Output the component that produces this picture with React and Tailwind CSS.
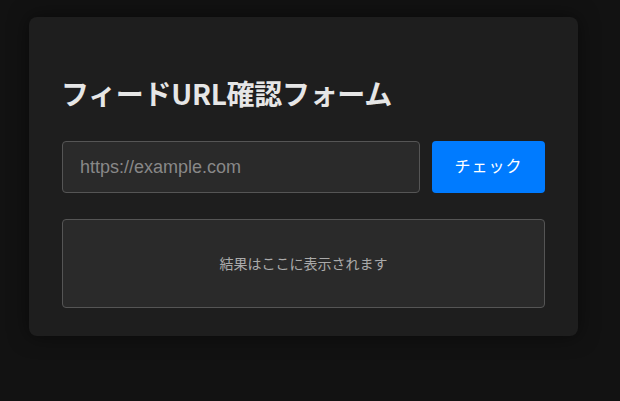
import React, { useState } from 'react';

export default function App() {
  const [url, setUrl] = useState('');

  return (
    <div className="min-h-[401px] bg-[#121212] pt-[17px] pl-[29px]" style={{ fontFamily: '"Noto Sans CJK JP", "Noto Sans", sans-serif' }}>
      <div className="w-[549px] rounded-[8px] bg-[#1e1e1e] px-[33px] pt-[55px] pb-[28px] shadow-[0_0_20px_rgba(0,0,0,0.5)]">
        <h1 className="text-[28px] leading-[42px] font-bold text-[#e6e6e6] mb-[27px] tracking-[-0.3px] -ml-[1px]">
          フィードURL確認フォーム
        </h1>

        <div className="flex gap-[12px]">
          <input
            value={url}
            onChange={e => setUrl(e.target.value)}
            placeholder="https://example.com"
            className="flex-1 h-[52px] rounded-[4px] border border-[#555] bg-[#2a2a2a] px-[17px] text-[18px] text-[#ddd] placeholder:text-[#888] outline-none"
            style={{ fontFamily: '"Liberation Sans", Arial, sans-serif' }}
          />
          <button
            className="w-[113px] h-[52px] rounded-[4px] bg-[#007bff] text-white text-[16px] tracking-[1px]"
            style={{ fontFamily: '"Liberation Serif", "Noto Sans CJK JP", serif' }}
          >
            チェック
          </button>
        </div>

        <div className="mt-[26px] h-[89px] rounded-[4px] border border-[#555] bg-[#2a2a2a] flex items-center justify-center text-[14px] text-[#aaa]">
          結果はここに表示されます
        </div>
      </div>
    </div>
  );
}
